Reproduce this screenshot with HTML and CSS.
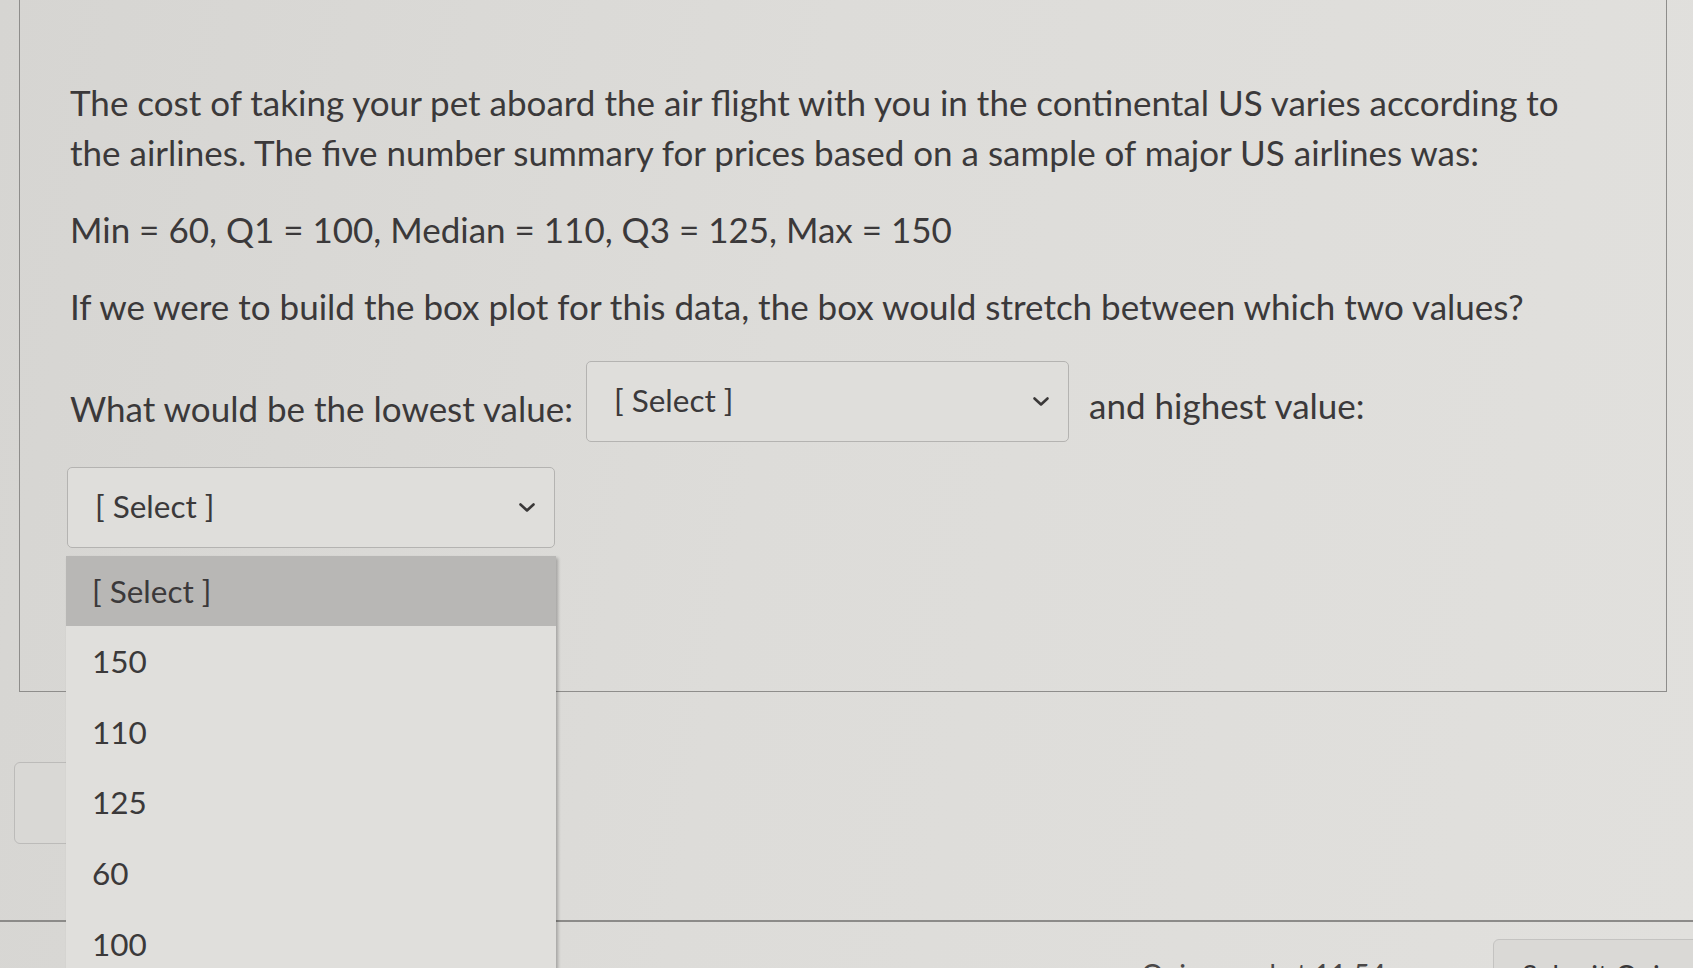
FILE: index.html
```html
<!DOCTYPE html>
<html lang="en">
<head>
<meta charset="utf-8">
<title>Quiz question</title>
<link rel="stylesheet" href="styles.css">
</head>
<body>
<div class="page">
  <div class="question">
    <p class="para">The cost of taking your pet aboard the air flight with you in the continental US varies according to the airlines. The five number summary for prices based on a sample of major US airlines was:</p>
    <p class="para">Min = 60, Q1 = 100, Median = 110, Q3 = 125, Max = 150</p>
    <p class="para">If we were to build the box plot for this data, the box would stretch between which two values?</p>
    <div class="answer-row">
      <span class="label">What would be the lowest value:</span>
      <div class="select select-one">
        <span class="select-text">[ Select ]</span>
        <svg class="chev" width="18" height="11" viewBox="0 0 18 11"><path d="M2.5 2.5 L9 8.5 L15.5 2.5" fill="none" stroke="#3a3838" stroke-width="2.6" stroke-linecap="round" stroke-linejoin="round"/></svg>
      </div>
      <span class="label label-after">and highest value:</span>
      <div class="select-wrap">
        <div class="select select-two">
          <span class="select-text">[ Select ]</span>
          <svg class="chev" width="18" height="11" viewBox="0 0 18 11"><path d="M2.5 2.5 L9 8.5 L15.5 2.5" fill="none" stroke="#3a3838" stroke-width="2.6" stroke-linecap="round" stroke-linejoin="round"/></svg>
        </div>
        <ul class="menu">
          <li class="opt opt-active">[ Select ]</li>
          <li class="opt">150</li>
          <li class="opt">110</li>
          <li class="opt">125</li>
          <li class="opt">60</li>
          <li class="opt">100</li>
        </ul>
      </div>
    </div>
  </div>
  <div class="nav-row">
    <div class="prev-btn"></div>
  </div>
  <div class="footer">
    <span class="saved">Quiz saved at 11:54am</span>
    <div class="submit-btn">Submit Quiz</div>
  </div>
</div>
</body>
</html>
```
FILE: styles.css
```css
html, body {
  margin: 0;
  padding: 0;
}
body {
  background: linear-gradient(100deg, #d6d5d2 0%, #dddcd9 45%, #e1e0dd 100%);
  font-family: "Lato", "Open Sans", sans-serif;
  color: #3b393a;
  width: 1693px;
  height: 968px;
  overflow: hidden;
}
.page {
  display: flex;
  flex-direction: column;
}
.question {
  margin-left: 19px;
  width: 1648px;
  box-sizing: border-box;
  height: 692px;
  border: 1.5px solid #8e8d8b;
  border-top: none;
  padding: 77px 90px 0 50px;
}
.para {
  margin: 0 0 27px 0;
  font-size: 35px;
  line-height: 50px;
}
.answer-row {
  display: flex;
  flex-wrap: wrap;
  align-items: center;
  row-gap: 25px;
  margin-top: 30px;
}
.label {
  font-size: 35px;
  line-height: 50px;
  position: relative;
  top: 6px;
}
.label-after {
  margin-left: 20px;
  top: 3px;
}
.select {
  box-sizing: border-box;
  height: 81px;
  border: 1.5px solid #b4b3b1;
  border-radius: 5px;
  background: #dfdedb;
  display: flex;
  align-items: center;
  justify-content: space-between;
  padding: 0 18px 0 27px;
  font-size: 31.5px;
}
.select-one {
  width: 483px;
  margin-left: 13px;
}
.select-two {
  width: 488px;
}
.select-wrap {
  position: relative;
  margin-left: -3px;
}
.select-text {
  position: relative;
  top: -2px;
}
.menu {
  position: absolute;
  left: -1px;
  top: 89px;
  width: 490px;
  margin: 0;
  padding: 0;
  list-style: none;
  background: #e0dfdc;
  box-shadow: 2px 2px 3px rgba(0,0,0,0.25);
  z-index: 5;
}
.opt {
  height: 70.6px;
  display: flex;
  align-items: center;
  padding-left: 26px;
  font-size: 31.5px;
}
.opt-active {
  background: #b8b7b5;
  height: 70px;
}
.nav-row {
  margin-top: 70px;
  padding-left: 14px;
}
.prev-btn {
  width: 180px;
  height: 82px;
  box-sizing: border-box;
  border: 1.5px solid #bcbbb9;
  border-radius: 6px;
  background: #d9d8d5;
}
.footer {
  margin-top: 76px;
  border-top: 2px solid #8c8b89;
  height: 60px;
  display: flex;
  justify-content: flex-end;
  align-items: flex-start;
  padding-top: 17px;
  gap: 70px;
}
.saved {
  font-size: 28px;
  margin-top: 18px;
  color: #4a4848;
}
.submit-btn {
  width: 240px;
  height: 80px;
  box-sizing: border-box;
  border: 1.5px solid #c4c3c1;
  border-radius: 6px 0 0 0;
  background: #dad9d6;
  font-size: 28px;
  padding: 18px 0 0 28px;
  margin-right: -40px;
}
```
